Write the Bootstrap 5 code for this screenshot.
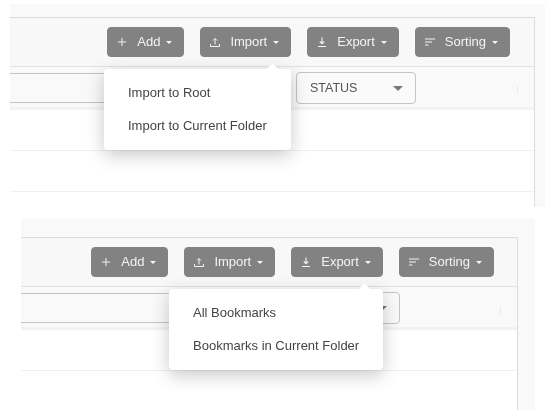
<!DOCTYPE html>
<html lang="en">
<head>
<meta charset="utf-8">
<title>Import and export menus</title>
<link href="https://cdn.jsdelivr.net/npm/bootstrap@5.3.0/dist/css/bootstrap.min.css" rel="stylesheet">
<style>
html,body{background:#fff;font-family:"Liberation Sans",Arial,sans-serif;overflow:hidden}
.shot{background:#f9f9f9;filter:blur(.3px)}
.shot-a{margin:4px 3px 0 10px;height:203px;padding:13px 10px 0 0}
.shot-b{margin:12px 13px 0 21px;height:191px;padding:18px 17px 0 0}
.pane{position:relative;height:100%;background:#fff;border-top:1px solid #dcdcdc;border-right:1px solid #dcdcdc}
.tools{height:49px;padding-right:24px;background:#f8f8f8;border-bottom:1px solid #e3e3e3}
.shot-b .tools{padding-right:23px}
.tool-btn{--bs-btn-bg:#828282;--bs-btn-border-color:#828282;--bs-btn-color:#f4f4f4;--bs-btn-hover-bg:#828282;--bs-btn-hover-color:#f4f4f4;--bs-btn-hover-border-color:#828282;height:30px;padding:0 11px 0 7px;font-size:13px;border-radius:4px;gap:8px;display:inline-flex;align-items:center}
.tool-btn.dropdown-toggle::after{margin-left:-2px;border-top-width:3px;border-left-width:3px;border-right-width:3px}
.tool-btn svg{width:14px;height:14px;flex:none}
.filters{height:43px;background:#f9f9f9;border-bottom:3px solid #f2f2f2}
.search-box{height:30px;width:270px;margin-top:6px;border-top:1px solid #c4c4c4;border-bottom:1px solid #c4c4c4}
.status-box{width:120px;height:32px;margin:5px 0 0 16px;padding:0 12px 0 13px;font-size:12.5px;color:#555;background:#fafafa;border:1px solid #c4c4c4;border-radius:4px}
.status-box::after{content:"";border-top:5px solid #777;border-left:5px solid transparent;border-right:5px solid transparent}
.tick{position:absolute;top:68px;right:16px;height:8px;border-left:1px solid #e9e9e9}
.data-row{height:41px;border-bottom:1px solid #f0f0f0}
.pop{display:block;position:absolute;margin:0;top:51px;padding:7px 0 8px;border:0;border-radius:4px;box-shadow:0 5px 18px rgba(0,0,0,.22);--bs-dropdown-link-color:#444;--bs-dropdown-font-size:13px}
.pop::before{content:"";position:absolute;top:-4px;right:14px;width:9px;height:9px;background:#fff;transform:rotate(45deg)}
.pop .dropdown-item{position:relative;height:33px;padding:0 24px;line-height:33px;font-size:13px;color:#444}
.pop-a{left:94px;width:187px}
.pop-b{left:148px;width:214px}
.shot-b .search-box{width:243px}
</style>
</head>
<body>
<svg width="0" height="0" class="d-block" aria-hidden="true">
<defs>
<symbol id="i-plus" viewBox="0 0 14 14"><path d="M7 3v8M3 7h8" fill="none" stroke="currentColor" stroke-width="1"/></symbol>
<symbol id="i-up" viewBox="0 0 14 14"><path d="M7 9.500V3.500M5 5.500 7 3.500l2 2M2.500 9v2.500h9V9" fill="none" stroke="currentColor" stroke-width="1"/></symbol>
<symbol id="i-down" viewBox="0 0 14 14"><path d="M7 2.500v6M4.800 6.500 7 8.800l2.200-2.300M3 11.500h8" fill="none" stroke="currentColor" stroke-width="1.100"/></symbol>
<symbol id="i-sort" viewBox="0 0 14 14"><path d="M2 4h10M2 7h7M2 10h3.500" fill="none" stroke="currentColor" stroke-width="1"/></symbol>
</defs>
</svg>

<div class="shot shot-a">
  <div class="pane">
    <div class="tools d-flex justify-content-end align-items-center gap-3">
      <button type="button" class="btn tool-btn dropdown-toggle"><svg><use href="#i-plus"/></svg>Add</button>
      <button type="button" class="btn tool-btn dropdown-toggle"><svg><use href="#i-up"/></svg>Import</button>
      <button type="button" class="btn tool-btn dropdown-toggle"><svg><use href="#i-down"/></svg>Export</button>
      <button type="button" class="btn tool-btn dropdown-toggle"><svg><use href="#i-sort"/></svg>Sorting</button>
    </div>
    <div class="filters d-flex align-items-start">
      <div class="search-box"></div>
      <div class="status-box d-flex align-items-center justify-content-between">STATUS</div>
    </div>
    <span class="tick"></span>
    <div class="data-row"></div>
    <div class="data-row"></div>
    <ul class="dropdown-menu pop pop-a">
      <li><a class="dropdown-item" href="#">Import to Root</a></li>
      <li><a class="dropdown-item" href="#">Import to Current Folder</a></li>
    </ul>
  </div>
</div>

<div class="shot shot-b">
  <div class="pane">
    <div class="tools d-flex justify-content-end align-items-center gap-3">
      <button type="button" class="btn tool-btn dropdown-toggle"><svg><use href="#i-plus"/></svg>Add</button>
      <button type="button" class="btn tool-btn dropdown-toggle"><svg><use href="#i-up"/></svg>Import</button>
      <button type="button" class="btn tool-btn dropdown-toggle"><svg><use href="#i-down"/></svg>Export</button>
      <button type="button" class="btn tool-btn dropdown-toggle"><svg><use href="#i-sort"/></svg>Sorting</button>
    </div>
    <div class="filters d-flex align-items-start">
      <div class="search-box"></div>
      <div class="status-box d-flex align-items-center justify-content-between">STATUS</div>
    </div>
    <span class="tick"></span>
    <div class="data-row"></div>
    <ul class="dropdown-menu pop pop-b">
      <li><a class="dropdown-item" href="#">All Bookmarks</a></li>
      <li><a class="dropdown-item" href="#">Bookmarks in Current Folder</a></li>
    </ul>
  </div>
</div>
<script src="https://cdn.jsdelivr.net/npm/bootstrap@5.3.0/dist/js/bootstrap.bundle.min.js"></script>
</body>
</html>
